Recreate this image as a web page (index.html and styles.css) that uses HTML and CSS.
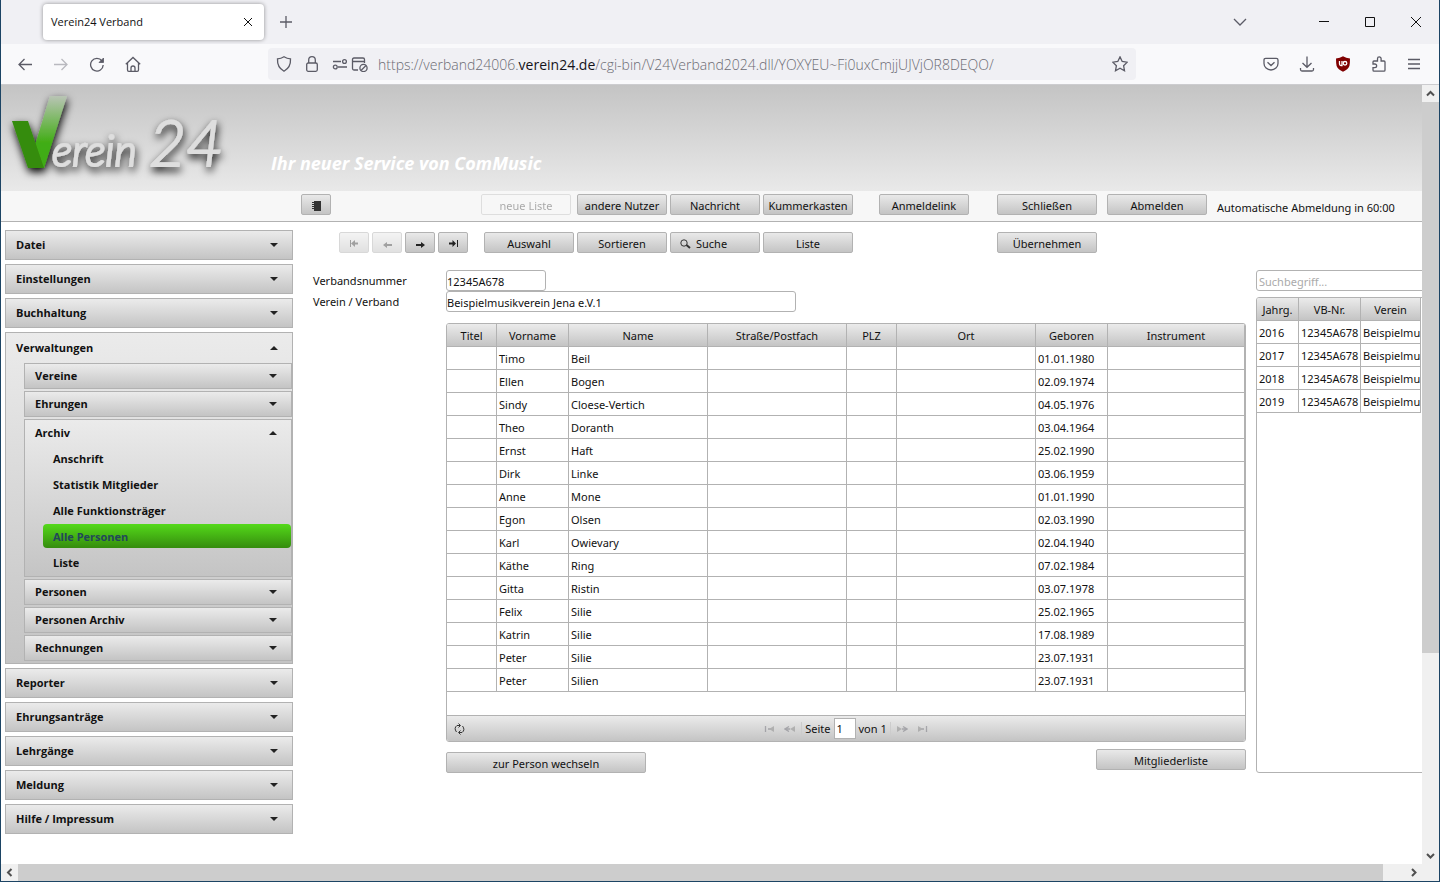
FILE: index.html
```html
<!DOCTYPE html>
<html lang="de">
<head>
    <meta charset="UTF-8">
    <meta name="viewport" content="width=device-width, initial-scale=1.0">
    <title>Verein24 Verband</title>
    <link rel="stylesheet" href="styles.css">
</head>
<body>
<div class="window">
    <div class="tabstrip">
        <div class="tab">
            <span>Verein24 Verband</span>
            <button class="icon-btn" aria-label="Tab schließen"><svg width="10" height="10" viewBox="0 0 10 10" stroke="#15141a"><path d="M1 1l8 8M9 1l-8 8"/></svg></button>
        </div>
        <button class="icon-btn new-tab" aria-label="Neuer Tab"><svg width="12" height="12" viewBox="0 0 12 12"><path d="M6 0v12M0 6h12"/></svg></button>
        <div class="win-controls">
            <button class="icon-btn tab-list" aria-label="Alle Tabs"><svg width="14" height="8" viewBox="0 0 14 8"><path d="M1 1l6 6 6-6"/></svg></button>
            <button class="icon-btn" aria-label="Minimieren"><svg width="10" height="10" viewBox="0 0 10 10" stroke="#000"><path d="M0 4.500h10"/></svg></button>
            <button class="icon-btn" aria-label="Maximieren"><svg width="10" height="10" viewBox="0 0 10 10" stroke="#000"><path d="M.5.5h9v9h-9z"/></svg></button>
            <button class="icon-btn" aria-label="Schließen"><svg width="10" height="10" viewBox="0 0 10 10" stroke="#000"><path d="M0 0l10 10M10 0L0 10"/></svg></button>
        </div>
    </div>

    <div class="navbar">
        <div class="nav-left">
            <button class="icon-btn" aria-label="Zurück"><svg width="16" height="16" viewBox="0 0 16 16"><path d="M15 8.500H2M7.500 3L2 8.500 7.500 14"/></svg></button>
            <button class="icon-btn dim" aria-label="Vor"><svg width="16" height="16" viewBox="0 0 16 16"><path d="M1 8.500h13M8.500 3L14 8.500 8.500 14"/></svg></button>
            <button class="icon-btn" aria-label="Neu laden"><svg width="16" height="16" viewBox="0 0 16 16"><path d="M13 5A6.300 6.300 0 1 0 14.200 9"/><path d="M14.500 2v4.500H10z" fill="#5b5b66" stroke-width=".8"/></svg></button>
            <button class="icon-btn" aria-label="Startseite"><svg width="16" height="16" viewBox="0 0 16 16"><path d="M.8 8.200L8 1.500l7.200 6.700M2.500 7v7q0 1.300 1.300 1.300h8.400q1.300 0 1.300-1.300V7M6 15.300V12a2 2 0 0 1 4 0v3.300"/></svg></button>
        </div>
        <div class="urlbar">
            <svg width="16" height="16" viewBox="0 0 16 16"><path d="M8 .8q3 2 6.500 2Q15 11.500 8 15.200 1 11.500 1.500 2.800 5 2.800 8 .8z"/></svg>
            <svg width="12" height="16" viewBox="0 0 12 16"><rect x=".7" y="7" width="10.600" height="8.300" rx="1.500"/><path d="M2.700 7V4a3.300 3.300 0 0 1 6.600 0v3"/></svg>
            <svg width="37" height="16" viewBox="0 0 37 16"><path d="M1 5.500h8M6 11h9"/><circle cx="12.500" cy="5.500" r="1.900"/><circle cx="3.300" cy="11" r="1.900"/><path d="M26 14h-4q-1.500 0-1.500-1.500v-9Q20.500 2 22 2h9q1.500 0 1.500 1.500V7M20.500 5.500h12"/><circle cx="31.500" cy="12" r="3.600"/><path d="M29 14.500l5-5"/></svg>
            <span class="url">https://verband24006.<b>verein24.de</b>/cgi-bin/V24Verband2024.dll/YOXYEU~Fi0uxCmjjUJVjOR8DEQO/</span>
            <button class="icon-btn" aria-label="Lesezeichen"><svg width="16" height="16" viewBox="0 0 16 16"><path d="M8 .9l2.200 4.600 5 .7-3.600 3.500.9 5L8 12.300l-4.500 2.400.9-5L.8 6.200l5-.7z"/></svg></button>
        </div>
        <div class="nav-right">
            <button class="icon-btn" aria-label="Pocket"><svg width="16" height="16" viewBox="0 0 16 16"><path d="M1 4q0-1.700 1.700-1.700h10.600Q15 2.300 15 4v3.500a7 6.500 0 0 1-14 0zM4.500 6.300L8 9.500l3.500-3.200"/></svg></button>
            <button class="icon-btn" aria-label="Downloads"><svg width="16" height="16" viewBox="0 0 16 16"><path d="M8 .5v10.500M3.500 7L8 11.300 12.500 7M1.500 12v1.500q0 1.500 1.500 1.500h10q1.500 0 1.500-1.500V12"/></svg></button>
            <button class="icon-btn" aria-label="uBlock"><svg width="16" height="16" viewBox="0 0 16 16"><path d="M8 .3q3 1.900 7 2.200 0 5-.6 7.500Q13 13.500 8 15.800 3 13.500 1.600 10 1 7.500 1 2.500q4-.3 7-2.200z" fill="#800000" stroke="none"/><path d="M4.500 5v3q0 1.500 1.500 1.500h1V5" stroke="#fff"/><circle cx="10" cy="7.300" r="1.800" stroke="#fff"/></svg></button>
            <button class="icon-btn" aria-label="Erweiterungen"><svg width="16" height="16" viewBox="0 0 16 16"><path d="M2 8V6q0-1 1-1h3.500V2.700a1.800 1.800 0 0 1 3.600 0V5H13q1 0 1 1v8q0 1.200-1 1.200H3q-1 0-1-1.200v-2.300h1.800a1.800 1.800 0 0 0 0-3.700z"/></svg></button>
            <button class="icon-btn" aria-label="Menü"><svg width="14" height="12" viewBox="0 0 14 12"><path d="M1 1.500h12M1 6h12M1 10.500h12"/></svg></button>
        </div>
    </div>

    <div class="viewport">
        <div class="page">
            <header class="banner">
                <svg class="logo" width="240" height="106" viewBox="0 0 240 106" role="img" aria-label="Verein 24">
                    <defs>
                        <linearGradient id="check" x1="0" y1="0" x2="0" y2="1">
                            <stop offset="0" stop-color="#b9c4b5"/>
                            <stop offset=".65" stop-color="#41ad14"/>
                            <stop offset="1" stop-color="#3fac12"/>
                        </linearGradient>
                        <filter id="shadow" x="-10%" y="-10%" width="125%" height="140%">
                            <feDropShadow dx="1" dy="4" stdDeviation="4" flood-color="#000"/>
                        </filter>
                    </defs>
                    <g filter="url(#shadow)">
                        <path d="M49 11h17L43 83H27z" fill="url(#check)"/>
                        <path d="M11 36h16l16 47H27z" fill="#358c0e"/>
                        <text x="51" y="81" class="logo-small">erein</text>
                        <text x="148" y="81" class="logo-large">24</text>
                    </g>
                </svg>
                <p class="claim">Ihr neuer Service von ComMusic</p>
            </header>

            <div class="menubar">
                <button class="btn btn-icon" aria-label="Menü einblenden"><svg width="9" height="10" viewBox="0 0 9 10"><path d="M2 0h7v10H2zM0 1h2v1H0zM0 3h2v1H0zM0 5h2v1H0zM0 7h2v1H0z" fill="#333"/></svg></button>
                <button class="btn new-list" disabled>neue Liste</button>
                <div class="group group-user">
                    <button class="btn">andere Nutzer</button>
                    <button class="btn">Nachricht</button>
                    <button class="btn">Kummerkasten</button>
                </div>
                <button class="btn btn-link">Anmeldelink</button>
                <div class="group group-session">
                    <button class="btn btn-wide">Schließen</button>
                    <button class="btn btn-wide">Abmelden</button>
                    <span class="timer">Automatische Abmeldung in 60:00</span>
                </div>
            </div>

            <div class="content">
                <nav class="sidebar">
                    <button class="menu-item">Datei</button>
                    <button class="menu-item">Einstellungen</button>
                    <button class="menu-item">Buchhaltung</button>
                    <div class="menu-open">
                        <button class="menu-head">Verwaltungen</button>
                        <div class="submenu">
                            <button class="menu-item">Vereine</button>
                            <button class="menu-item">Ehrungen</button>
                            <div class="menu-open">
                                <button class="menu-head">Archiv</button>
                                <ul class="links">
                                    <li><a href="#">Anschrift</a></li>
                                    <li><a href="#">Statistik Mitglieder</a></li>
                                    <li><a href="#">Alle Funktionsträger</a></li>
                                    <li><a href="#" class="active">Alle Personen</a></li>
                                    <li><a href="#">Liste</a></li>
                                </ul>
                            </div>
                            <button class="menu-item">Personen</button>
                            <button class="menu-item">Personen Archiv</button>
                            <button class="menu-item">Rechnungen</button>
                        </div>
                    </div>
                    <button class="menu-item">Reporter</button>
                    <button class="menu-item">Ehrungsanträge</button>
                    <button class="menu-item">Lehrgänge</button>
                    <button class="menu-item">Meldung</button>
                    <button class="menu-item">Hilfe / Impressum</button>
                </nav>

                <main>
                    <div class="toolbar">
                        <div class="group">
                            <button class="btn btn-icon" disabled aria-label="Erster"><svg width="9" height="8" viewBox="0 0 9 8"><path d="M0 0h1v7H0zM1 3.500L5 0v2.500h3v2H5V7z" fill="#444"/></svg></button>
                            <button class="btn btn-icon" disabled aria-label="Voriger"><svg width="9" height="8" viewBox="0 0 9 8"><path d="M0 5l4-3v2h5v2H4v2z" fill="#444"/></svg></button>
                            <button class="btn btn-icon" aria-label="Nächster"><svg width="9" height="8" viewBox="0 0 9 8"><path d="M9 5L5 2v2H0v2h5v2z" fill="#222"/></svg></button>
                            <button class="btn btn-icon" aria-label="Letzter"><svg width="9" height="8" viewBox="0 0 9 8"><path d="M8 0h1v7H8zM7 3.500L3.500 0v2.500H0v2h3.500V7z" fill="#222"/></svg></button>
                        </div>
                        <div class="group group-actions">
                            <button class="btn">Auswahl</button>
                            <button class="btn">Sortieren</button>
                            <button class="btn btn-search"><svg width="11" height="10" viewBox="0 0 11 10"><circle cx="4" cy="4" r="3.200" fill="none" stroke="#333"/><path d="M6.500 6l3.500 3" stroke="#333" stroke-width="2"/></svg>Suche</button>
                            <button class="btn">Liste</button>
                        </div>
                        <button class="btn btn-wide">Übernehmen</button>
                    </div>

                    <div class="columns">
                        <div class="detail">
                            <form class="fields">
                                <label for="number">Verbandsnummer</label>
                                <input type="text" id="number" name="number" value="12345A678">
                                <label for="club">Verein / Verband</label>
                                <input type="text" id="club" name="club" value="Beispielmusikverein Jena e.V.1">
                            </form>

                            <div class="datagrid">
                                <table>
                                    <colgroup>
                                        <col class="c-short"><col class="c-medium"><col class="c-long"><col class="c-long"><col class="c-short"><col class="c-long"><col class="c-medium"><col>
                                    </colgroup>
                                    <thead>
                                    <tr><th>Titel</th><th>Vorname</th><th>Name</th><th>Straße/Postfach</th><th>PLZ</th><th>Ort</th><th>Geboren</th><th>Instrument</th></tr>
                                    </thead>
                                    <tbody>
                                    <tr><td></td><td>Timo</td><td>Beil</td><td></td><td></td><td></td><td>01.01.1980</td><td></td></tr>
                                    <tr><td></td><td>Ellen</td><td>Bogen</td><td></td><td></td><td></td><td>02.09.1974</td><td></td></tr>
                                    <tr><td></td><td>Sindy</td><td>Cloese-Vertich</td><td></td><td></td><td></td><td>04.05.1976</td><td></td></tr>
                                    <tr><td></td><td>Theo</td><td>Doranth</td><td></td><td></td><td></td><td>03.04.1964</td><td></td></tr>
                                    <tr><td></td><td>Ernst</td><td>Haft</td><td></td><td></td><td></td><td>25.02.1990</td><td></td></tr>
                                    <tr><td></td><td>Dirk</td><td>Linke</td><td></td><td></td><td></td><td>03.06.1959</td><td></td></tr>
                                    <tr><td></td><td>Anne</td><td>Mone</td><td></td><td></td><td></td><td>01.01.1990</td><td></td></tr>
                                    <tr><td></td><td>Egon</td><td>Olsen</td><td></td><td></td><td></td><td>02.03.1990</td><td></td></tr>
                                    <tr><td></td><td>Karl</td><td>Owievary</td><td></td><td></td><td></td><td>02.04.1940</td><td></td></tr>
                                    <tr><td></td><td>Käthe</td><td>Ring</td><td></td><td></td><td></td><td>07.02.1984</td><td></td></tr>
                                    <tr><td></td><td>Gitta</td><td>Ristin</td><td></td><td></td><td></td><td>03.07.1978</td><td></td></tr>
                                    <tr><td></td><td>Felix</td><td>Silie</td><td></td><td></td><td></td><td>25.02.1965</td><td></td></tr>
                                    <tr><td></td><td>Katrin</td><td>Silie</td><td></td><td></td><td></td><td>17.08.1989</td><td></td></tr>
                                    <tr><td></td><td>Peter</td><td>Silie</td><td></td><td></td><td></td><td>23.07.1931</td><td></td></tr>
                                    <tr><td></td><td>Peter</td><td>Silien</td><td></td><td></td><td></td><td>23.07.1931</td><td></td></tr>
                                    </tbody>
                                </table>
                                <div class="pager">
                                    <button class="icon-btn" aria-label="Aktualisieren"><svg class="refresh" width="11" height="12" viewBox="0 0 11 12"><path d="M2.500 9Q-.5 5 3 2.500h3M4.500.500l2 2-2 2M8.500 3q3 4-.5 6.500H5M6.500 7.500l-2 2 2 2"/></svg></button>
                                    <div class="pages">
                                        <button class="icon-btn dim" disabled aria-label="Erste Seite"><svg width="11" height="6" viewBox="0 0 11 6"><path d="M1.500 0v6M4 3h3"/><path d="M5 3l5-3v6z" fill="#777" stroke="none"/></svg></button>
                                        <button class="icon-btn dim" disabled aria-label="Vorige Seite"><svg width="11" height="6" viewBox="0 0 11 6"><path d="M5 .5L1 3l4 2.500M2 3h4"/><path d="M6 3l5-3v6z" fill="#777" stroke="none"/></svg></button>
                                        <span class="sep"></span>
                                        <label for="pageno">Seite</label>
                                        <input type="text" id="pageno" name="pageno" value="1">
                                        <span>von 1</span>
                                        <span class="sep"></span>
                                        <button class="icon-btn dim" disabled aria-label="Nächste Seite"><svg width="11" height="6" viewBox="0 0 11 6"><path d="M6 .5L10 3 6 5.500M5 3h4"/><path d="M5 3L0 0v6z" fill="#777" stroke="none"/></svg></button>
                                        <button class="icon-btn dim" disabled aria-label="Letzte Seite"><svg width="11" height="6" viewBox="0 0 11 6"><path d="M9.500 0v6M4 3h3"/><path d="M6 3L1 0v6z" fill="#777" stroke="none"/></svg></button>
                                    </div>
                                </div>
                            </div>

                            <div class="actions">
                                <button class="btn goto">zur Person wechseln</button>
                                <button class="btn members">Mitgliederliste</button>
                            </div>
                        </div>

                        <aside class="history">
                            <input type="text" placeholder="Suchbegriff..." aria-label="Suchbegriff">
                            <div class="datagrid">
                                <table>
                                    <colgroup><col class="c-year"><col class="c-number"><col></colgroup>
                                    <thead>
                                    <tr><th>Jahrg.</th><th>VB-Nr.</th><th>Verein</th></tr>
                                    </thead>
                                    <tbody>
                                    <tr><td>2016</td><td>12345A678</td><td>Beispielmusikverein</td></tr>
                                    <tr><td>2017</td><td>12345A678</td><td>Beispielmusikverein</td></tr>
                                    <tr><td>2018</td><td>12345A678</td><td>Beispielmusikverein</td></tr>
                                    <tr><td>2019</td><td>12345A678</td><td>Beispielmusikverein</td></tr>
                                    </tbody>
                                </table>
                            </div>
                        </aside>
                    </div>
                </main>
            </div>
        </div>

        <div class="scroll scroll-y">
            <svg width="17" height="17" viewBox="0 0 17 17"><path d="M5 10.500L8.500 7l3.500 3.500"/></svg>
            <div class="track"><div class="thumb"></div></div>
            <svg width="17" height="17" viewBox="0 0 17 17"><path d="M5 7l3.500 3.500L12 7"/></svg>
        </div>
        <div class="scroll scroll-x">
            <svg width="17" height="17" viewBox="0 0 17 17"><path d="M10.500 5L7 8.500l3.500 3.500"/></svg>
            <div class="track"><div class="thumb"></div></div>
            <svg width="17" height="17" viewBox="0 0 17 17"><path d="M7 5l3.500 3.500L7 12"/></svg>
        </div>
        <div class="corner"></div>
    </div>
</div>
</body>
</html>
```
FILE: styles.css
```css
* {
    box-sizing: border-box;
}

body {
    margin: 0;
    font-family: "Noto Sans", "Open Sans", sans-serif;
    font-size: 11px;
    line-height: 16px;
    color: #111;
}

button, input {
    font: inherit;
    color: inherit;
    margin: 0;
}

button {
    padding: 0;
    cursor: pointer;
}

svg {
    display: block;
    flex: none;
}

/* browser window */
.window {
    display: flex;
    flex-direction: column;
    height: 100vh;
    border: 1px solid #1c4464;
    border-top: 0;
    overflow: hidden;
    background: #fff;
}

.icon-btn {
    border: 0;
    background: none;
}

.icon-btn svg, .urlbar > svg {
    fill: none;
    stroke: #5b5b66;
    stroke-width: 1.3;
}

.tab .icon-btn svg, .win-controls .icon-btn svg {
    stroke: #111;
    stroke-width: 1;
}

.win-controls .tab-list svg {
    stroke: #5b5b66;
    stroke-width: 1.3;
}

.dim {
    opacity: .4;
}

.tabstrip {
    display: flex;
    align-items: center;
    height: 44px;
    flex: none;
    padding: 0 18px 0 42px;
    background: #f0f0f4;
}

.tab {
    display: flex;
    align-items: center;
    justify-content: space-between;
    width: 221px;
    height: 36px;
    padding: 0 11px 0 8px;
    border-radius: 4px;
    background: #fff;
    box-shadow: 0 0 4px rgba(0, 0, 0, .4);
    font-family: "Open Sans", sans-serif;
}

.new-tab {
    margin-left: 16px;
}

.win-controls {
    display: flex;
    align-items: center;
    gap: 36px;
    margin-left: auto;
}

.tab-list {
    margin-right: 36px;
}

.navbar {
    display: flex;
    align-items: center;
    height: 41px;
    flex: none;
    padding: 0 18px 0 16px;
    border-bottom: 1px solid #cccccf;
    background: #f9f9fb;
}

.nav-left, .nav-right {
    display: flex;
    align-items: center;
    gap: 20px;
}

.nav-left {
    width: 251px;
}

.urlbar {
    display: flex;
    align-items: center;
    flex: 1;
    height: 32px;
    padding: 0 8px;
    border-radius: 4px;
    background: #f0f0f4;
    font-family: "Open Sans", sans-serif;
    font-size: 14px;
}

.urlbar > svg {
    margin-right: 14px;
}

.urlbar > svg:nth-of-type(3) {
    margin-right: 9px;
}

.url {
    flex: 1;
    padding-top: 2px;
    font-weight: 300;
    color: #6b6b73;
}

.url b {
    font-weight: normal;
    color: #15141a;
}

.nav-right {
    margin-left: 127px;
}

/* scrollable page area */
.viewport {
    display: grid;
    grid-template-columns: minmax(0, 1fr) 17px;
    grid-template-rows: minmax(0, 1fr) 17px;
    flex: 1;
    min-height: 0;
}

.page {
    overflow: hidden;
}

.scroll {
    display: flex;
    background: #f0f0f0;
}

.scroll svg {
    fill: none;
    stroke: #505050;
    stroke-width: 2;
}

.scroll-y {
    flex-direction: column;
}

.track {
    flex: 1;
}

.thumb {
    background: #cdcdcd;
}

.scroll-y .thumb {
    height: 74%;
}

.scroll-x .thumb {
    width: calc(100% - 22px);
    height: 100%;
}

.corner {
    background: #f0f0f0;
}

/* banner */
.banner {
    display: flex;
    align-items: flex-end;
    height: 106px;
    background: linear-gradient(#c4c4c4, #e9e9e9);
}

.logo text {
    font-family: Lato, sans-serif;
    font-style: italic;
    font-weight: 300;
    fill: #dedede;
    stroke: #dedede;
    stroke-width: 2;
}

.logo .logo-small {
    font-size: 43px;
}

.logo .logo-large {
    font-size: 64px;
}

.claim {
    margin: 0 0 15px 30px;
    font-family: "Open Sans", sans-serif;
    font-size: 18px;
    line-height: 26px;
    font-weight: bold;
    font-style: italic;
    color: #fff;
}

.menubar {
    display: flex;
    align-items: flex-start;
    height: 31px;
    padding: 3px 0 0 300px;
    border-bottom: 1px solid #b2b2b2;
    background: #f7f7f7;
}

/* buttons */
.btn {
    display: flex;
    align-items: center;
    justify-content: center;
    flex: none;
    width: 90px;
    height: 21px;
    padding-top: 2px;
    border: 1px solid #b2b2b2;
    border-radius: 2px;
    background: linear-gradient(#e9e9e9, #c4c4c4);
    white-space: nowrap;
}

.btn:disabled {
    opacity: .5;
}

.btn-icon {
    width: 30px;
}

.btn-wide {
    width: 100px;
}

.btn-search {
    justify-content: flex-start;
    gap: 5px;
    padding-left: 9px;
}

.group {
    display: flex;
    gap: 3px;
}

.btn.new-list {
    margin-left: 150px;
    background: none;
    opacity: .35;
}

.group-user {
    margin-left: 6px;
}

.btn-link {
    margin-left: 26px;
}

.group-session {
    gap: 10px;
    margin-left: 28px;
}

.timer {
    padding-top: 6px;
    white-space: nowrap;
}

.toolbar {
    display: flex;
    padding-left: 26px;
}

.group-actions {
    margin: 0 144px 0 16px;
}

/* accordion menu */
.content {
    display: flex;
    gap: 20px;
    padding: 8px 0 0 4px;
}

.sidebar {
    display: flex;
    flex-direction: column;
    flex: none;
    gap: 4px;
    width: 288px;
    font-family: "Open Sans", sans-serif;
    font-weight: bold;
}

.menu-item, .menu-head {
    display: flex;
    align-items: center;
    justify-content: space-between;
    width: 100%;
    height: 30px;
    padding: 0 14px 0 10px;
    text-align: left;
}

.menu-item {
    border: 1px solid #b2b2b2;
    background: linear-gradient(#ebebeb, #c4c4c4);
}

.menu-head {
    border: 0;
    background: none;
}

.menu-item::after, .menu-head::after {
    content: "";
    border: 4px solid transparent;
    border-top-color: #222;
    border-bottom: 0;
}

.menu-head::after {
    border-top: 0;
    border-bottom: 4px solid #222;
}

.menu-open {
    border: 1px solid #b2b2b2;
    background: linear-gradient(#ebebeb, #c4c4c4);
}

.submenu {
    display: flex;
    flex-direction: column;
    gap: 2px;
    padding: 0 0 2px 18px;
}

.submenu .menu-item, .submenu .menu-head {
    height: 26px;
}

.links {
    display: flex;
    flex-direction: column;
    gap: 2px;
    margin: 0;
    padding: 0 0 2px 18px;
    list-style: none;
}

.links a {
    display: block;
    padding: 5px 10px 3px;
    border-radius: 4px;
    color: inherit;
    text-decoration: none;
}

.links .active {
    background: linear-gradient(#54d91a, #358c0e);
    color: #22475a;
}

/* main area */
main {
    flex: 1;
    min-width: 0;
    padding-top: 2px;
}

.columns {
    display: flex;
    gap: 10px;
    margin-top: 17px;
}

.detail {
    flex: 1;
    min-width: 0;
}

.fields {
    display: grid;
    grid-template-columns: 133px 1fr;
    align-items: center;
}

.fields input, .history input {
    height: 21px;
    padding: 2px 0 0;
    border: 1px solid #b2b2b2;
    border-radius: 3px;
    background: #fff;
}

.fields #number {
    width: 100px;
}

.fields #club {
    width: 350px;
}

.datagrid {
    border: 1px solid #b2b2b2;
    border-radius: 3px;
    overflow: hidden;
}

.detail .datagrid {
    margin: 11px 0 0 133px;
}

table {
    width: 100%;
    table-layout: fixed;
    border-collapse: separate;
    border-spacing: 0;
}

th, td {
    height: 23px;
    padding: 2px 2px 0;
    border: solid #b2b2b2;
    border-width: 0 1px 1px 0;
    overflow: hidden;
    white-space: nowrap;
    text-align: left;
}

th {
    background: linear-gradient(#ebebeb, #c4c4c4);
    font-weight: normal;
    text-align: center;
}

.c-short {
    width: 50px;
}

.c-medium {
    width: 72px;
}

.c-long {
    width: 139px;
}

.c-year {
    width: 42px;
}

.c-number {
    width: 62px;
}

.pager {
    display: grid;
    grid-template-columns: 1fr auto 1fr;
    align-items: center;
    height: 26px;
    margin-top: 23px;
    padding: 0 7px;
    border-top: 1px solid #b2b2b2;
    background: linear-gradient(#ebebeb, #c4c4c4);
}

.pager > .icon-btn {
    justify-self: start;
}

.pager .refresh {
    stroke: #333;
    stroke-width: 1;
}

.pages {
    display: flex;
    align-items: center;
    gap: 3px;
}

.pages .icon-btn {
    margin: 0 3px;
}

.pages input {
    width: 22px;
    height: 21px;
    padding: 0 2px;
    border: 1px solid #b2b2b2;
    background: #fff;
}

.sep {
    width: 1px;
    height: 14px;
    background: #ccc;
}

.actions {
    display: flex;
    justify-content: space-between;
    height: 24px;
    margin: 7px 0 0 133px;
}

.goto {
    align-self: flex-end;
    width: 200px;
}

.members {
    width: 150px;
}

/* year list runs past the right edge of the page */
.history {
    flex: none;
    width: 166px;
    overflow: hidden;
}

.history input {
    display: block;
    width: 200px;
    padding-left: 2px;
}

.history input::placeholder {
    color: #aaa;
}

.history .datagrid {
    width: 200px;
    height: 476px;
    margin-top: 6px;
}

.history table {
    width: 164px;
}
```
